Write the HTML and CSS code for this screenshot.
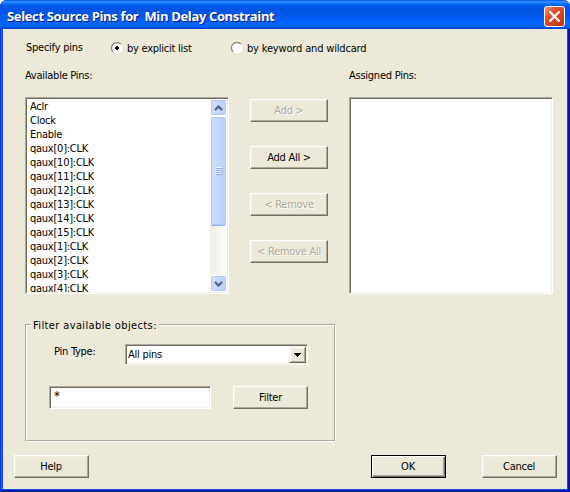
FILE: index.html
```html
<!DOCTYPE html>
<html lang="en">

<head>
    <meta charset="UTF-8" />
    <title>Select Source Pins for Min Delay Constraint</title>
    <link rel="stylesheet" href="styles.css">
</head>

<body>
    <div class="window">
        <div class="titlebar">
            <span class="title">Select Source Pins for&nbsp; Min Delay Constraint</span>
            <svg class="close" width="21" height="21" viewBox="0 0 21 21">
                <defs>
                    <linearGradient id="red" x1="0" y1="0" x2="1" y2="1">
                        <stop offset="0" stop-color="#f0957c" />
                        <stop offset="0.35" stop-color="#e2512e" />
                        <stop offset="1" stop-color="#b93210" />
                    </linearGradient>
                </defs>
                <rect x="0.5" y="0.5" width="20" height="20" rx="2.5" fill="url(#red)" stroke="#fff" />
                <path d="M5.5 5.5 L15.5 15.5 M15.5 5.5 L5.5 15.5" stroke="#fff" stroke-width="2.3" />
            </svg>
        </div>

        <div class="client">
            <div class="mode">
                <span class="mode-label">Specify pins</span>
                <svg class="radio" width="12" height="12" viewBox="0 0 12 12">
                    <circle cx="6" cy="6" r="5.5" fill="#fff" />
                    <path d="M2.1 9.9 A5.5 5.5 0 0 1 9.9 2.1" fill="none" stroke="#8a8778" stroke-width="1.3" />
                    <path d="M5 4h2v1h1v2h-1v1h-2v-1h-1v-2h1z" fill="#000" />
                </svg>
                <span class="option explicit">by explicit list</span>
                <svg class="radio" width="12" height="12" viewBox="0 0 12 12">
                    <circle cx="6" cy="6" r="5.5" fill="#fff" />
                    <path d="M2.1 9.9 A5.5 5.5 0 0 1 9.9 2.1" fill="none" stroke="#8a8778" stroke-width="1.3" />
                </svg>
                <span class="option keyword">by keyword and wildcard</span>
            </div>

            <div class="columns">
                <div class="pins">
                    <div class="caption">Available Pins:</div>
                    <div class="listbox sunken">
                        <div class="items">
                            <div>Aclr</div>
                            <div>Clock</div>
                            <div>Enable</div>
                            <div>qaux[0]:CLK</div>
                            <div>qaux[10]:CLK</div>
                            <div>qaux[11]:CLK</div>
                            <div>qaux[12]:CLK</div>
                            <div>qaux[13]:CLK</div>
                            <div>qaux[14]:CLK</div>
                            <div>qaux[15]:CLK</div>
                            <div>qaux[1]:CLK</div>
                            <div>qaux[2]:CLK</div>
                            <div>qaux[3]:CLK</div>
                            <div>qaux[4]:CLK</div>
                        </div>
                        <div class="scrollbar">
                            <div class="arrow">
                                <svg width="9" height="6" viewBox="0 0 9 6"><path d="M1 5 L4.5 1.5 L8 5" fill="none" stroke="#4d6185" stroke-width="2.2" /></svg>
                            </div>
                            <div class="thumb">
                                <svg width="8" height="8" viewBox="0 0 8 8">
                                    <path d="M0 .5h7M0 2.5h7M0 4.5h7M0 6.5h7" stroke="#eef4fe" />
                                    <path d="M1 1.5h7M1 3.5h7M1 5.5h7M1 7.5h7" stroke="#8cb0f8" />
                                </svg>
                            </div>
                            <div class="arrow down">
                                <svg width="9" height="6" viewBox="0 0 9 6"><path d="M1 1 L4.5 4.5 L8 1" fill="none" stroke="#4d6185" stroke-width="2.2" /></svg>
                            </div>
                        </div>
                    </div>
                </div>

                <div class="actions">
                    <div class="button disabled">Add &gt;</div>
                    <div class="button">Add All &gt;</div>
                    <div class="button disabled">&lt; Remove</div>
                    <div class="button disabled">&lt; Remove All</div>
                </div>

                <div class="pins">
                    <div class="caption assigned">Assigned Pins:</div>
                    <div class="listbox sunken"></div>
                </div>
            </div>

            <div class="group">
                <div class="group-inner">
                    <div class="legend"><span>Filter available objects:</span></div>
                    <div class="type-row">
                        <span class="type-label">Pin Type:</span>
                        <div class="select sunken">
                            <span>All pins</span>
                            <div class="drop">
                                <svg width="7" height="4" viewBox="0 0 7 4"><path d="M0 0h7v1h-1v1h-1v1h-1v1h-1v-1h-1v-1h-1v-1h-1z" /></svg>
                            </div>
                        </div>
                    </div>
                    <div class="filter-row">
                        <div class="pattern sunken">*</div>
                        <div class="button">Filter</div>
                    </div>
                </div>
            </div>

            <div class="footer">
                <div class="button">Help</div>
                <div class="button default">OK</div>
                <div class="button">Cancel</div>
            </div>
        </div>
    </div>
</body>

</html>
```

FILE: styles.css
```css
* {
    box-sizing: border-box;
}

body {
    margin: 0;
    background: #fff;
    font-family: "DejaVu Sans Condensed", "DejaVu Sans", sans-serif;
    font-size: 11px;
    line-height: 14px;
    letter-spacing: -0.25px;
    color: #000;
    white-space: nowrap;
}

svg {
    display: block;
    flex: none;
}

.window {
    width: 570px;
    height: 492px;
    padding: 0 3px 3px;
    display: flex;
    flex-direction: column;
    background: #0a50e0;
    border-radius: 7px 7px 0 0;
    box-shadow: inset 1px 0 #0831d9, inset -1px -1px #00138c, inset -2px -2px #001dbd, inset 2px 0 #166aee;
    overflow: hidden;
}

.titlebar {
    height: 29px;
    margin: 0 -3px;
    padding: 3px 5px 0 7px;
    flex: none;
    display: flex;
    align-items: center;
    justify-content: space-between;
    background: linear-gradient(#0058e6 0, #3a93ff 2px, #0468f4 4px, #0054e3 7px, #0055e5 14px, #0262fb 20px, #0066ff 25px, #005bf0 27px, #003dd7 29px);
}

.title {
    font-family: "Open Sans", "Noto Sans", sans-serif;
    font-size: 13px;
    font-weight: bold;
    letter-spacing: -0.35px;
    color: #fff;
    text-shadow: 1px 1px #0a1883;
}

.client {
    flex: 1;
    background: #ece9d8;
    padding: 12px 10px 0 11px;
}

.mode {
    height: 14px;
    padding-left: 12px;
    display: flex;
    align-items: center;
}

.mode-label {
    width: 85px;
}

.option {
    padding: 1px 0 0 4px;
}

.explicit {
    width: 108px;
}

.keyword {
    letter-spacing: -0.17px;
}

.columns {
    display: flex;
    padding-left: 11px;
    margin-top: 13px;
}

.pins {
    width: 204px;
}

.caption {
    height: 29px;
    padding-top: 1px;
}

.sunken {
    border: 1px solid;
    border-color: #aca899 #fff #fff #aca899;
    background: #fff;
    box-shadow: inset 1px 1px #716f64, inset -1px -1px #f1efe2;
}

.listbox {
    height: 197px;
    padding: 1px;
    display: flex;
    justify-content: space-between;
}

.items {
    height: 193px;
    padding: 1px 0 0 3px;
    overflow: hidden;
}

.scrollbar {
    width: 17px;
    display: flex;
    flex-direction: column;
    background: linear-gradient(to right, #eeede5, #fefefb);
}

.arrow,
.thumb {
    border: 1px solid #fff;
    border-radius: 3px;
    box-shadow: inset 0 0 0 1px #b4c8f6;
    background: linear-gradient(to right, #d0dffd, #b9cefb);
    display: flex;
    align-items: center;
    justify-content: center;
}

.arrow {
    height: 17px;
}

.thumb {
    height: 110px;
    border-bottom-color: #8fb0e8;
}

.down {
    margin-top: auto;
}

.actions {
    margin: 31px 21px 0;
    display: flex;
    flex-direction: column;
    gap: 24px;
}

.button {
    width: 75px;
    height: 23px;
    border: 1px solid;
    border-color: #fff #716f64 #716f64 #fff;
    box-shadow: inset -1px -1px #aca899, inset 1px 1px #f1efe2;
    display: flex;
    align-items: center;
    justify-content: center;
}

.actions .button {
    width: 78px;
}

.disabled {
    color: #aca899;
    text-shadow: 1px 1px #fff;
}

.default {
    border-color: #000;
    box-shadow: inset 1px 1px #fff, inset -1px -1px #716f64, inset -2px -2px #aca899;
}

.group {
    width: 311px;
    height: 118px;
    margin: 30px 0 0 11px;
    border: 1px solid;
    border-color: #aca899 #fff #fff #aca899;
}

.group-inner {
    height: 116px;
    border: 1px solid;
    border-color: #fff #aca899 #aca899 #fff;
}

.legend {
    height: 14px;
    margin: -7px 0 0 4px;
    letter-spacing: 0.38px;
}

.legend span {
    display: inline-block;
    padding: 0 2px;
    background: #ece9d8;
}

.type-row {
    display: flex;
    margin: 11px 0 0 27px;
}

.type-label {
    width: 71px;
    padding-top: 1px;
}

.select {
    width: 183px;
    height: 21px;
    padding: 1px 1px 1px 2px;
    display: flex;
    align-items: center;
    justify-content: space-between;
}

.select span {
    padding-top: 1px;
}

.drop {
    width: 17px;
    height: 17px;
    background: #ece9d8;
    border: 1px solid;
    border-color: #f1efe2 #716f64 #716f64 #f1efe2;
    box-shadow: inset 1px 1px #fff, inset -1px -1px #aca899;
    display: flex;
    align-items: center;
    justify-content: center;
}

.filter-row {
    display: flex;
    gap: 22px;
    margin: 21px 0 0 22px;
}

.pattern {
    width: 162px;
    height: 23px;
    padding: 2px 4px;
    font-size: 13px;
}

.footer {
    display: flex;
    margin-top: 13px;
}

.footer .button {
    padding-right: 1px;
}

.footer .default {
    margin: 0 36px 0 auto;
}
```
